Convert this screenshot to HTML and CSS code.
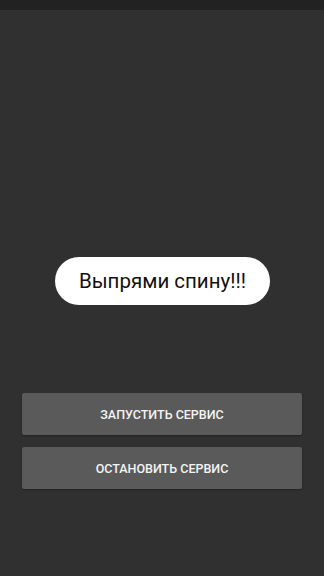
FILE: index.html
```html
<!DOCTYPE html>
<html lang="ru">
<head>
  <meta charset="UTF-8">
  <meta name="viewport" content="width=device-width, initial-scale=1.0">
  <title>Выпрями спину</title>
  <link rel="stylesheet" href="styles.css">
</head>
<body>
  <!-- Status Bar -->
  <div class="status-bar"></div>

  <!-- Main Screen -->
  <main class="screen">
    <div class="buttons">
      <button class="btn">Запустить сервис</button>
      <button class="btn">Остановить сервис</button>
    </div>
  </main>

  <!-- Toast -->
  <div class="toast">Выпрями спину!!!</div>
</body>
</html>
```

FILE: styles.css
```css
/* Reset */
* {
  margin: 0;
  padding: 0;
  box-sizing: border-box;
  font-family: Roboto, 'Noto Sans', sans-serif;
}

body {
  background-color: #303030;
  min-height: 100vh;
  position: relative;
}

/* Status Bar */
.status-bar {
  height: 10px;
  background-color: #222;
}

/* Main Screen */
.screen {
  padding: 383px 22px 0;
}

.buttons {
  display: flex;
  flex-direction: column;
  gap: 12px;
}

.btn {
  height: 42px;
  border: none;
  border-radius: 2px;
  background-color: #5a5a5a;
  color: #f4f4f4;
  font-size: 12.5px;
  font-weight: 500;
  text-transform: uppercase;
  box-shadow: 0 1px 2px rgba(0,0,0,0.3);
}

/* Toast */
.toast {
  position: absolute;
  top: 257px;
  left: 55px;
  width: 215px;
  height: 48px;
  border-radius: 24px;
  background-color: #fff;
  color: #111;
  font-size: 20.5px;
  padding-bottom: 1px;
  display: flex;
  align-items: center;
  justify-content: center;
}
```
